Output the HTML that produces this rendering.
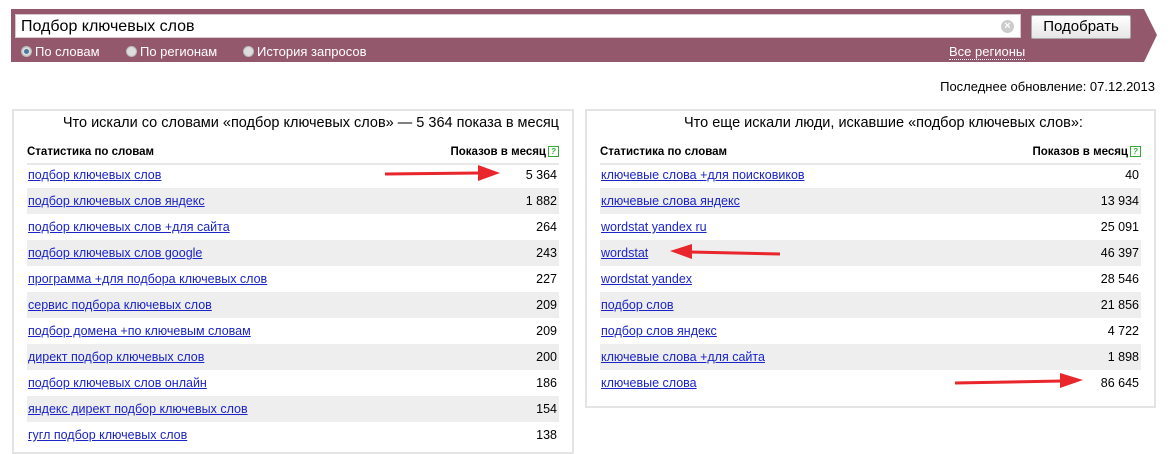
<!DOCTYPE html><html><head><meta charset="utf-8"><style>
body{margin:0;width:1174px;height:448px;background:#fff;font-family:"Liberation Sans",Arial,sans-serif;position:relative;overflow:hidden;color:#000}
.inp{position:absolute;left:15px;top:14px;width:1006px;height:24px;background:#fff;border:1px solid #d8c8cc;font-size:16px;line-height:24px;padding-left:5px;box-sizing:border-box}
.x{position:absolute;right:6px;top:5px;width:13px;height:13px;border-radius:50%;background:#ccc;color:#fff;font-size:11px;line-height:13px;text-align:center;font-weight:bold}
.btn{position:absolute;left:1031px;top:15px;width:100px;height:24px;background:linear-gradient(#fff,#e6e6e6);border:1px solid #aaa;border-radius:2px;box-sizing:border-box;font-size:15px;text-align:center;line-height:22px}
.opt{position:absolute;top:44px;color:#fff;font-size:13px}
.rad{display:inline-block;width:9px;height:9px;border-radius:50%;background:#ddd;border:1px solid #bbb;vertical-align:-1px;margin-right:3px}
.reg{position:absolute;left:949px;top:44px;color:#fff;font-size:13px;border-bottom:1px dotted #fff;line-height:15px}
.upd{position:absolute;right:19px;top:79px;font-size:13px}
.panel{position:absolute;border:2px solid #e4e4e4;background:#fff;box-sizing:border-box}
.title{position:absolute;top:4px;font-size:14.5px;white-space:nowrap}
.hdr{position:absolute;left:13px;right:13px;top:35px;height:13px;border-bottom:2px solid #e8e8e8;font-size:11.5px;font-weight:bold;padding-bottom:4px}
.hdr span{position:absolute;right:0;top:0}
.q{display:inline-block;width:9px;height:9px;border:1px solid #3a3;color:#3a3;font-size:8px;line-height:9px;text-align:center;margin-left:2px;vertical-align:1px}
.row{position:absolute;left:13px;right:13px;height:26px;font-size:12.5px;line-height:26px}
.row a{color:#1b24c8;text-decoration:underline;padding-left:1px}
.row b{position:absolute;right:2px;font-weight:normal}
.g{background:#eee}
</style></head><body>
<svg style="position:absolute;left:0;top:0" width="1174" height="70"><polygon points="11,9 1144,9 1157,35 1144,62 11,62" fill="#94586d"/></svg>
<div class="inp">Подбор ключевых слов<div class="x">×</div></div>
<div class="btn">Подобрать</div>
<div class="opt" style="left:21px"><span class="rad" style="background:#4a7a9a;box-shadow:inset 0 0 0 2px #ddd"></span>По словам</div>
<div class="opt" style="left:126px"><span class="rad"></span>По регионам</div>
<div class="opt" style="left:243px"><span class="rad"></span>История запросов</div>
<div class="reg">Все регионы</div>
<div class="upd">Последнее обновление: 07.12.2013</div>

<div class="panel" style="left:12px;top:109px;width:562px;height:345px">
<div class="title" style="right:13px">Что искали со словами «подбор ключевых слов» — 5 364 показа в месяц</div>
<div class="hdr">Статистика по словам<span>Показов в месяц<i class="q">?</i></span></div>
<div class="row" style="top:51px"><a>подбор ключевых слов</a><b>5 364</b></div>
<div class="row g" style="top:77px"><a>подбор ключевых слов яндекс</a><b>1 882</b></div>
<div class="row" style="top:103px"><a>подбор ключевых слов +для сайта</a><b>264</b></div>
<div class="row g" style="top:129px"><a>подбор ключевых слов google</a><b>243</b></div>
<div class="row" style="top:155px"><a>программа +для подбора ключевых слов</a><b>227</b></div>
<div class="row g" style="top:181px"><a>сервис подбора ключевых слов</a><b>209</b></div>
<div class="row" style="top:207px"><a>подбор домена +по ключевым словам</a><b>209</b></div>
<div class="row g" style="top:233px"><a>директ подбор ключевых слов</a><b>200</b></div>
<div class="row" style="top:259px"><a>подбор ключевых слов онлайн</a><b>186</b></div>
<div class="row g" style="top:285px"><a>яндекс директ подбор ключевых слов</a><b>154</b></div>
<div class="row" style="top:311px"><a>гугл подбор ключевых слов</a><b>138</b></div>
</div>

<div class="panel" style="left:585px;top:109px;width:571px;height:299px">
<div class="title" style="left:97px">Что еще искали люди, искавшие «подбор ключевых слов»:</div>
<div class="hdr">Статистика по словам<span>Показов в месяц<i class="q">?</i></span></div>
<div class="row" style="top:51px"><a>ключевые слова +для поисковиков</a><b>40</b></div>
<div class="row g" style="top:77px"><a>ключевые слова яндекс</a><b>13 934</b></div>
<div class="row" style="top:103px"><a>wordstat yandex ru</a><b>25 091</b></div>
<div class="row g" style="top:129px"><a>wordstat</a><b>46 397</b></div>
<div class="row" style="top:155px"><a>wordstat yandex</a><b>28 546</b></div>
<div class="row g" style="top:181px"><a>подбор слов</a><b>21 856</b></div>
<div class="row" style="top:207px"><a>подбор слов яндекс</a><b>4 722</b></div>
<div class="row g" style="top:233px"><a>ключевые слова +для сайта</a><b>1 898</b></div>
<div class="row" style="top:259px"><a>ключевые слова</a><b>86 645</b></div>
</div>

<svg style="position:absolute;left:0;top:0" width="1174" height="448">
<g fill="#e8262b" stroke="#e8262b">
<line x1="385" y1="174" x2="480" y2="173" stroke-width="3"/><polygon points="478,165 500,173 478,181" stroke="none"/>
<line x1="780" y1="254" x2="690" y2="252" stroke-width="3"/><polygon points="692,244 670,251 692,259" stroke="none"/>
<line x1="955" y1="383" x2="1062" y2="381" stroke-width="3"/><polygon points="1060,373 1083,380 1060,388" stroke="none"/>
</g></svg>
</body></html>
